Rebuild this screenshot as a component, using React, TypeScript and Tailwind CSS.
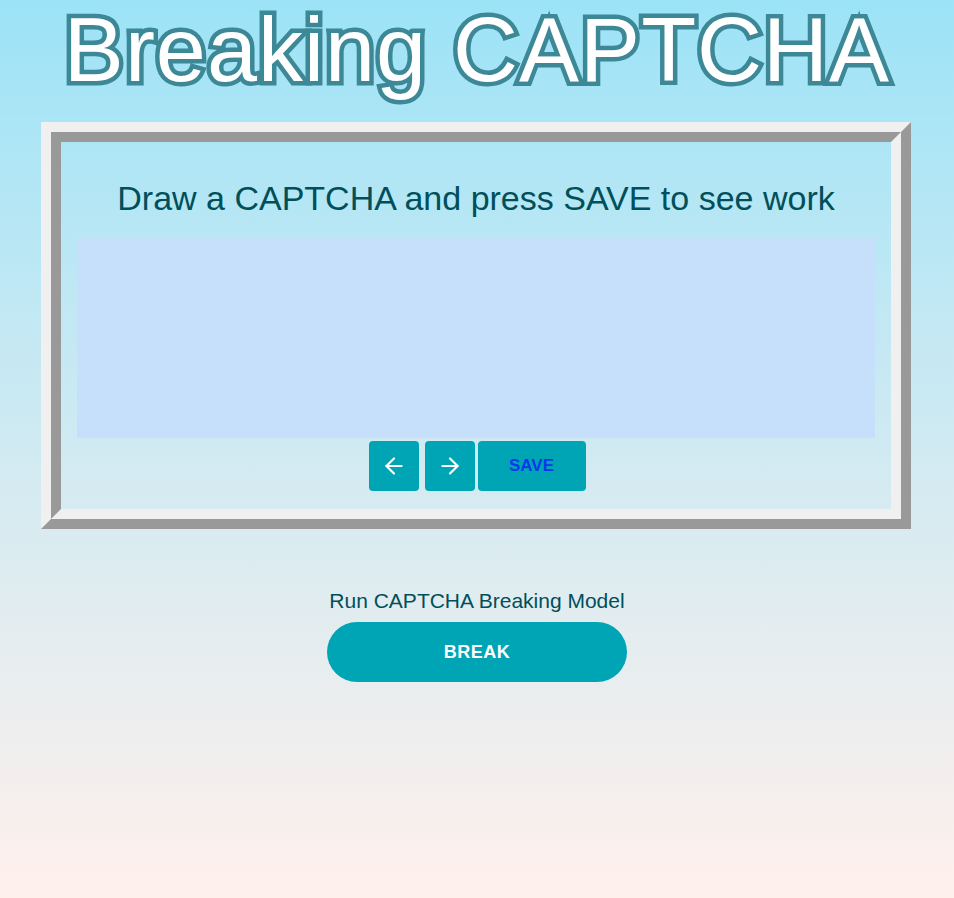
import { ArrowLeft, ArrowRight } from 'lucide-react';

// Page: outlined title, ridge-framed drawing pad, and the break action below.

export default function App() {
  return (
    <div className="min-h-screen h-[898px] w-full bg-gradient-to-b from-[#9ce3f7] to-[#fff0ec] font-['Liberation_Sans',Arial,sans-serif] text-[#004f5a]">
      <h1 className="h-[101px] text-center text-[90px] leading-[1.12] tracking-[1px] text-white [-webkit-text-stroke:9px_#3d8896] [paint-order:stroke_fill]">
        Breaking CAPTCHA
      </h1>

      <div className="ml-[41px] mt-[21px] w-[870px] border-[10px] border-t-[#f0f0f0] border-l-[#f0f0f0] border-r-[#999999] border-b-[#999999]">
        <div className="flex flex-col items-center border-[10px] border-t-[#999999] border-l-[#999999] border-r-[#f0f0f0] border-b-[#f0f0f0] pt-[36px] pb-[18px]">
          <p className="text-[34px] leading-[40px]">Draw a CAPTCHA and press SAVE to see work</p>
          <div className="mt-[20px] h-[200px] w-[798px] bg-[#c6e0fb]" />
          <div className="mt-[3px] ml-[2px] flex">
            <button className="flex h-[50px] w-[50px] items-center justify-center rounded-[4px] bg-[#00a5b5] text-white">
              <ArrowLeft size={26} strokeWidth={2} />
            </button>
            <button className="ml-[6px] flex h-[50px] w-[50px] items-center justify-center rounded-[4px] bg-[#00a5b5] text-white">
              <ArrowRight size={26} strokeWidth={2} />
            </button>
            <button className="ml-[3px] h-[50px] w-[108px] rounded-[4px] bg-[#00a5b5] text-[17px] font-bold text-[#0b36f0]">
              SAVE
            </button>
          </div>
        </div>
      </div>

      <div className="mt-[60px] flex flex-col items-center">
        <p className="text-[21px] leading-[24px]">Run CAPTCHA Breaking Model</p>
        <button className="mt-[9px] h-[60px] w-[300px] rounded-full bg-[#00a5b5] text-[18px] font-bold tracking-[0.5px] text-white">
          BREAK
        </button>
      </div>
    </div>
  );
}
